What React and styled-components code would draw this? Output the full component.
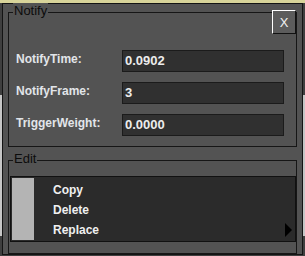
import React from "react";
import styled, { createGlobalStyle } from "styled-components";

const GlobalStyle = createGlobalStyle`
  html, body {
    margin: 0;
    padding: 0;
  }
  body {
    width: 305px;
    height: 256px;
    overflow: hidden;
    font-family: "Liberation Sans", Arial, sans-serif;
    background: linear-gradient(
      to bottom,
      #d8d49a 0px,
      #d8d49a 3px,
      #3f3f3f 3px,
      #3f3f3f 95px,
      #c6c6c6 95px,
      #c6c6c6 236px,
      #3f3f3f 236px
    );
  }
`;

const Window = styled.div`
  box-sizing: border-box;
  margin: 3px 0 0 2px;
  width: 301px;
  height: 252px;
  border: 1px solid #141414;
  background: #535353;
  padding: 8px 5px 0 5px;
  display: flex;
  flex-direction: column;
`;

const GroupBox = styled.div`
  position: relative;
  box-sizing: border-box;
  border: 1px solid #161616;
  height: ${(p) => p.$height}px;
  margin-top: ${(p) => p.$top || 0}px;
  padding: ${(p) => p.$padding};
`;

const Legend = styled.span`
  position: absolute;
  top: -10px;
  left: 4px;
  padding: 0 1px;
  background: #535353;
  color: #0c0c0c;
  font-size: 13px;
  line-height: 16px;
`;

const CloseButton = styled.div`
  position: absolute;
  top: -3px;
  right: 0;
  box-sizing: border-box;
  width: 24px;
  height: 24px;
  border-top: 1px solid #ffffff;
  border-left: 1px solid #ffffff;
  border-right: 1px solid #111111;
  border-bottom: 1px solid #111111;
  background: #5c5c5c;
  color: #f2f2f2;
  font-size: 13px;
  display: flex;
  align-items: center;
  justify-content: center;
`;

const Fields = styled.div`
  display: flex;
  flex-direction: column;
  gap: 10px;
`;

const Row = styled.div`
  display: flex;
  align-items: flex-start;
`;

const Label = styled.div`
  width: 106px;
  color: #e2e5e9;
  font-size: 12px;
  font-weight: bold;
  line-height: 18px;
`;

const Value = styled.div`
  box-sizing: border-box;
  width: 162px;
  height: 22px;
  border: 1px solid #1b1b1b;
  background: #303030;
  color: #ececec;
  font-size: 13px;
  font-weight: bold;
  line-height: 20px;
  padding-left: 2px;
`;

const Menu = styled.div`
  box-sizing: border-box;
  margin-left: 1px;
  height: 66px;
  border: 1px solid #111111;
  background: #2b2b2b;
  padding: 1px;
  display: flex;
`;

const Gutter = styled.div`
  width: 22px;
  background: #b4b4b4;
`;

const Items = styled.div`
  flex: 1;
  display: flex;
  flex-direction: column;
  padding-top: 2px;
`;

const Item = styled.div`
  position: relative;
  height: 20px;
  padding-left: 19px;
  color: #f0f0f0;
  font-size: 12px;
  font-weight: bold;
  line-height: 20px;
`;

const SubArrow = styled.span`
  position: absolute;
  right: 2px;
  top: 3px;
  width: 0;
  height: 0;
  border-top: 7px solid transparent;
  border-bottom: 7px solid transparent;
  border-left: 7px solid #000000;
`;

const fields = [
  { label: "NotifyTime:", value: "0.0902" },
  { label: "NotifyFrame:", value: "3" },
  { label: "TriggerWeight:", value: "0.0000" },
];

const items = [
  { name: "Copy" },
  { name: "Delete" },
  { name: "Replace", sub: true },
];

export default function App() {
  return (
    <>
      <GlobalStyle />
      <Window>
        <GroupBox $height={135} $padding="37px 12px 10px 7px">
          <Legend>Notify</Legend>
          <CloseButton>X</CloseButton>
          <Fields>
            {fields.map((f) => (
              <Row key={f.label}>
                <Label>{f.label}</Label>
                <Value>{f.value}</Value>
              </Row>
            ))}
          </Fields>
        </GroupBox>
        <GroupBox $height={94} $top={13} $padding="15px 0 11px 0">
          <Legend>Edit</Legend>
          <Menu>
            <Gutter />
            <Items>
              {items.map((it) => (
                <Item key={it.name}>
                  {it.name}
                  {it.sub && <SubArrow />}
                </Item>
              ))}
            </Items>
          </Menu>
        </GroupBox>
      </Window>
    </>
  );
}
